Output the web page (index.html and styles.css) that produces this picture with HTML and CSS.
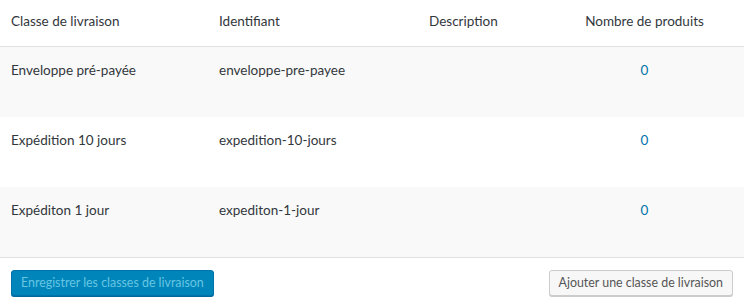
FILE: index.html
```html
<!DOCTYPE html>
<html lang="fr">
<head>
    <meta charset="UTF-8">
    <title>Classes de livraison</title>
    <link rel="stylesheet" href="styles.css">
</head>
<body>

    <table class="shipping-classes">
        <colgroup>
            <col class="col-name">
            <col class="col-slug">
            <col class="col-desc">
            <col class="col-count">
        </colgroup>
        <thead>
            <tr>
                <th>Classe de livraison</th>
                <th>Identifiant</th>
                <th>Description</th>
                <th class="count">Nombre de produits</th>
            </tr>
        </thead>
        <tbody>
            <tr class="alt">
                <td>Enveloppe pré-payée</td>
                <td>enveloppe-pre-payee</td>
                <td></td>
                <td class="count"><a href="#">0</a></td>
            </tr>
            <tr>
                <td>Expédition 10 jours</td>
                <td>expedition-10-jours</td>
                <td></td>
                <td class="count"><a href="#">0</a></td>
            </tr>
            <tr class="alt">
                <td>Expéditon 1 jour</td>
                <td>expediton-1-jour</td>
                <td></td>
                <td class="count"><a href="#">0</a></td>
            </tr>
        </tbody>
    </table>

    <div class="table-footer">
        <button class="btn-save" disabled>Enregistrer les classes de livraison</button>
        <button class="btn-add">Ajouter une classe de livraison</button>
    </div>

</body>
</html>
```

FILE: styles.css
```css
body {
    margin: 0;
    background: #fff;
    font-family: "Lato", "Open Sans", sans-serif;
    font-size: 13.5px;
    color: #32373c;
}

.shipping-classes {
    width: 100%;
    border-collapse: collapse;
    table-layout: fixed;
}

.col-name  { width: 208px; }
.col-slug  { width: 210px; }
.col-desc  { width: 127px; }
.col-count { width: 199px; }

.shipping-classes th {
    font-weight: normal;
    text-align: left;
    line-height: 20px;
    padding: 11px 11px 15px;
    border-bottom: 1px solid #e1e1e1;
}

.shipping-classes td {
    line-height: 20px;
    padding: 13px 11px 37px;
    vertical-align: top;
}

.shipping-classes tr.alt td {
    background: #f9f9f9;
}

.shipping-classes .count {
    text-align: center;
}

.shipping-classes a {
    color: #0073aa;
    text-decoration: none;
}

.table-footer {
    display: flex;
    justify-content: space-between;
    padding: 12px 11px;
    border-top: 1px solid #e1e1e1;
}

.table-footer button {
    font-family: inherit;
    font-size: 12.4px;
    line-height: 24px;
    height: 26px;
    padding: 0 9px;
    border-radius: 3px;
    cursor: pointer;
}

.btn-save {
    background: #0085ba;
    border: 1px solid #0073aa;
    color: #66c6e4;
    box-shadow: 0 1px 0 #006799;
}

.btn-add {
    background: #f7f7f7;
    border: 1px solid #ccc;
    color: #555;
    box-shadow: 0 1px 0 #ccc;
}
```
